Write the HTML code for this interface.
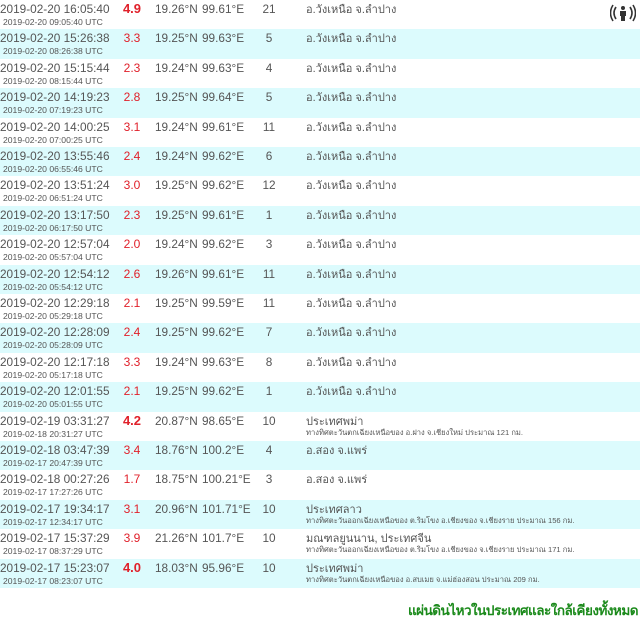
<!DOCTYPE html>
<html><head><meta charset="utf-8"><style>
*{margin:0;padding:0;box-sizing:border-box}
body{width:640px;height:625px;background:#fff;position:relative;overflow:hidden;font-family:"Liberation Sans","DejaVu Sans",sans-serif;color:#555}
span{line-height:14px}
.r{position:absolute;left:0;width:640px;height:29.4px}
.c{background:#dcfbfd}
.t{position:absolute;left:0;top:2px;font-size:11.8px;white-space:nowrap}
.u{position:absolute;left:3px;top:15px;font-size:8.6px;white-space:nowrap}
.m{position:absolute;left:118px;width:28px;text-align:center;top:2px;font-size:12px;color:#e0202a}
.m.b{font-weight:bold;font-size:13px}
.la{position:absolute;left:155px;top:2px;font-size:11.8px}
.lo{position:absolute;left:202px;top:2px;font-size:11.8px}
.d{position:absolute;left:255px;width:28px;text-align:center;top:2px;font-size:11.8px}
.p{position:absolute;left:306px;top:3px;font-size:11px;white-space:nowrap;line-height:14px}
.s{position:absolute;left:306px;top:15px;font-size:7.6px;white-space:nowrap;line-height:12px}
.f{position:absolute;right:2px;top:602px;font-size:13.5px;font-weight:bold;color:#1b8a1b;letter-spacing:-0.5px;line-height:18px}
</style></head><body>
<div class="r" style="top:0"><span class="t">2019-02-20 16:05:40</span><span class="u">2019-02-20 09:05:40 UTC</span><span class="m b">4.9</span><span class="la">19.26°N</span><span class="lo">99.61°E</span><span class="d">21</span><span class="p">อ.วังเหนือ จ.ลำปาง</span>
<svg style="position:absolute;left:610px;top:4px" width="26" height="18" viewBox="0 0 26 18"><g fill="none" stroke="#333" stroke-width="1.6"><path d="M6 3 Q2 9 6 15"/><path d="M3 1 Q-2 9 3 17"/><path d="M20 3 Q24 9 20 15"/><path d="M23 1 Q28 9 23 17"/></g><circle cx="13" cy="4" r="2" fill="#333"/><path d="M10 7h6v5h-1v5h-4v-5h-1z" fill="#333"/></svg></div>
<div class="r c" style="top:29.4px"><span class="t">2019-02-20 15:26:38</span><span class="u">2019-02-20 08:26:38 UTC</span><span class="m">3.3</span><span class="la">19.25°N</span><span class="lo">99.63°E</span><span class="d">5</span><span class="p">อ.วังเหนือ จ.ลำปาง</span></div>
<div class="r" style="top:58.8px"><span class="t">2019-02-20 15:15:44</span><span class="u">2019-02-20 08:15:44 UTC</span><span class="m">2.3</span><span class="la">19.24°N</span><span class="lo">99.63°E</span><span class="d">4</span><span class="p">อ.วังเหนือ จ.ลำปาง</span></div>
<div class="r c" style="top:88.2px"><span class="t">2019-02-20 14:19:23</span><span class="u">2019-02-20 07:19:23 UTC</span><span class="m">2.8</span><span class="la">19.25°N</span><span class="lo">99.64°E</span><span class="d">5</span><span class="p">อ.วังเหนือ จ.ลำปาง</span></div>
<div class="r" style="top:117.6px"><span class="t">2019-02-20 14:00:25</span><span class="u">2019-02-20 07:00:25 UTC</span><span class="m">3.1</span><span class="la">19.24°N</span><span class="lo">99.61°E</span><span class="d">11</span><span class="p">อ.วังเหนือ จ.ลำปาง</span></div>
<div class="r c" style="top:147px"><span class="t">2019-02-20 13:55:46</span><span class="u">2019-02-20 06:55:46 UTC</span><span class="m">2.4</span><span class="la">19.24°N</span><span class="lo">99.62°E</span><span class="d">6</span><span class="p">อ.วังเหนือ จ.ลำปาง</span></div>
<div class="r" style="top:176.4px"><span class="t">2019-02-20 13:51:24</span><span class="u">2019-02-20 06:51:24 UTC</span><span class="m">3.0</span><span class="la">19.25°N</span><span class="lo">99.62°E</span><span class="d">12</span><span class="p">อ.วังเหนือ จ.ลำปาง</span></div>
<div class="r c" style="top:205.8px"><span class="t">2019-02-20 13:17:50</span><span class="u">2019-02-20 06:17:50 UTC</span><span class="m">2.3</span><span class="la">19.25°N</span><span class="lo">99.61°E</span><span class="d">1</span><span class="p">อ.วังเหนือ จ.ลำปาง</span></div>
<div class="r" style="top:235.2px"><span class="t">2019-02-20 12:57:04</span><span class="u">2019-02-20 05:57:04 UTC</span><span class="m">2.0</span><span class="la">19.24°N</span><span class="lo">99.62°E</span><span class="d">3</span><span class="p">อ.วังเหนือ จ.ลำปาง</span></div>
<div class="r c" style="top:264.6px"><span class="t">2019-02-20 12:54:12</span><span class="u">2019-02-20 05:54:12 UTC</span><span class="m">2.6</span><span class="la">19.26°N</span><span class="lo">99.61°E</span><span class="d">11</span><span class="p">อ.วังเหนือ จ.ลำปาง</span></div>
<div class="r" style="top:294px"><span class="t">2019-02-20 12:29:18</span><span class="u">2019-02-20 05:29:18 UTC</span><span class="m">2.1</span><span class="la">19.25°N</span><span class="lo">99.59°E</span><span class="d">11</span><span class="p">อ.วังเหนือ จ.ลำปาง</span></div>
<div class="r c" style="top:323.4px"><span class="t">2019-02-20 12:28:09</span><span class="u">2019-02-20 05:28:09 UTC</span><span class="m">2.4</span><span class="la">19.25°N</span><span class="lo">99.62°E</span><span class="d">7</span><span class="p">อ.วังเหนือ จ.ลำปาง</span></div>
<div class="r" style="top:352.8px"><span class="t">2019-02-20 12:17:18</span><span class="u">2019-02-20 05:17:18 UTC</span><span class="m">3.3</span><span class="la">19.24°N</span><span class="lo">99.63°E</span><span class="d">8</span><span class="p">อ.วังเหนือ จ.ลำปาง</span></div>
<div class="r c" style="top:382.2px"><span class="t">2019-02-20 12:01:55</span><span class="u">2019-02-20 05:01:55 UTC</span><span class="m">2.1</span><span class="la">19.25°N</span><span class="lo">99.62°E</span><span class="d">1</span><span class="p">อ.วังเหนือ จ.ลำปาง</span></div>
<div class="r" style="top:411.6px"><span class="t">2019-02-19 03:31:27</span><span class="u">2019-02-18 20:31:27 UTC</span><span class="m b">4.2</span><span class="la">20.87°N</span><span class="lo">98.65°E</span><span class="d">10</span><span class="p">ประเทศพม่า</span><span class="s">ทางทิศตะวันตกเฉียงเหนือของ อ.ฝาง จ.เชียงใหม่ ประมาณ 121 กม.</span></div>
<div class="r c" style="top:441px"><span class="t">2019-02-18 03:47:39</span><span class="u">2019-02-17 20:47:39 UTC</span><span class="m">3.4</span><span class="la">18.76°N</span><span class="lo">100.2°E</span><span class="d">4</span><span class="p">อ.สอง จ.แพร่</span></div>
<div class="r" style="top:470.4px"><span class="t">2019-02-18 00:27:26</span><span class="u">2019-02-17 17:27:26 UTC</span><span class="m">1.7</span><span class="la">18.75°N</span><span class="lo">100.21°E</span><span class="d">3</span><span class="p">อ.สอง จ.แพร่</span></div>
<div class="r c" style="top:499.8px"><span class="t">2019-02-17 19:34:17</span><span class="u">2019-02-17 12:34:17 UTC</span><span class="m">3.1</span><span class="la">20.96°N</span><span class="lo">101.71°E</span><span class="d">10</span><span class="p">ประเทศลาว</span><span class="s">ทางทิศตะวันออกเฉียงเหนือของ ต.ริมโขง อ.เชียงของ จ.เชียงราย ประมาณ 156 กม.</span></div>
<div class="r" style="top:529.2px"><span class="t">2019-02-17 15:37:29</span><span class="u">2019-02-17 08:37:29 UTC</span><span class="m">3.9</span><span class="la">21.26°N</span><span class="lo">101.7°E</span><span class="d">10</span><span class="p">มณฑลยูนนาน, ประเทศจีน</span><span class="s">ทางทิศตะวันออกเฉียงเหนือของ ต.ริมโขง อ.เชียงของ จ.เชียงราย ประมาณ 171 กม.</span></div>
<div class="r c" style="top:558.6px"><span class="t">2019-02-17 15:23:07</span><span class="u">2019-02-17 08:23:07 UTC</span><span class="m b">4.0</span><span class="la">18.03°N</span><span class="lo">95.96°E</span><span class="d">10</span><span class="p">ประเทศพม่า</span><span class="s">ทางทิศตะวันตกเฉียงเหนือของ อ.สบเมย จ.แม่ฮ่องสอน ประมาณ 209 กม.</span></div>
<div class="f">แผ่นดินไหวในประเทศและใกล้เคียงทั้งหมด</div>
</body></html>
